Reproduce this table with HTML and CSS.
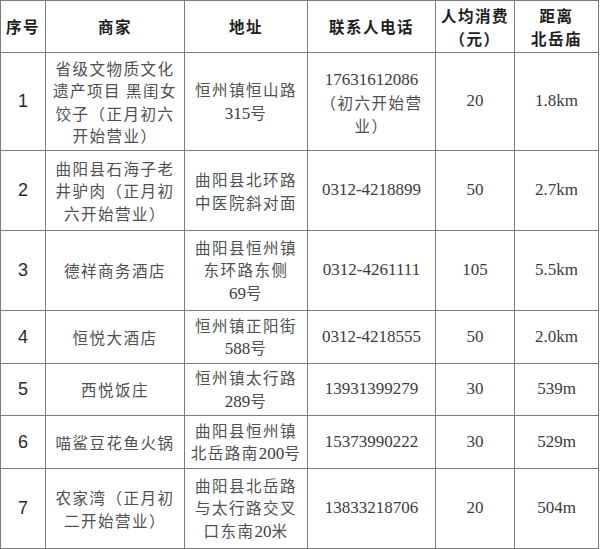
FILE: index.html
```html
<!DOCTYPE html>
<html lang="zh">
<head>
<meta charset="utf-8">
<link rel="stylesheet" href="styles.css">
</head>
<body>
<table class="tbl">
  <colgroup>
    <col class="c1"><col class="c2"><col class="c3"><col class="c4"><col class="c5"><col class="c6">
  </colgroup>
  <thead>
    <tr class="h-head">
      <th>序号</th><th>商家</th><th>地址</th><th>联系人电话</th><th>人均消费<br>（元）</th><th>距离<br>北岳庙</th>
    </tr>
  </thead>
  <tbody>
    <tr class="h-r1">
      <td class="num">1</td>
      <td>省级文物质文化<br>遗产项目 黑闺女<br>饺子（正月初六<br>开始营业）</td>
      <td>恒州镇恒山路<br><span class="lat">315</span>号</td>
      <td><span class="lat">17631612086</span><br>（初六开始营<br>业）</td>
      <td class="lat">20</td>
      <td class="lat">1.8km</td>
    </tr>
    <tr class="h-r2">
      <td class="num">2</td>
      <td>曲阳县石海子老<br>井驴肉（正月初<br>六开始营业）</td>
      <td>曲阳县北环路<br>中医院斜对面</td>
      <td class="lat">0312-4218899</td>
      <td class="lat">50</td>
      <td class="lat">2.7km</td>
    </tr>
    <tr class="h-r3">
      <td class="num">3</td>
      <td>德祥商务酒店</td>
      <td>曲阳县恒州镇<br>东环路东侧<br><span class="lat">69</span>号</td>
      <td class="lat">0312-4261111</td>
      <td class="lat">105</td>
      <td class="lat">5.5km</td>
    </tr>
    <tr class="h-r4">
      <td class="num">4</td>
      <td>恒悦大酒店</td>
      <td>恒州镇正阳街<br><span class="lat">588</span>号</td>
      <td class="lat">0312-4218555</td>
      <td class="lat">50</td>
      <td class="lat">2.0km</td>
    </tr>
    <tr class="h-r5">
      <td class="num">5</td>
      <td>西悦饭庄</td>
      <td>恒州镇太行路<br><span class="lat">289</span>号</td>
      <td class="lat">13931399279</td>
      <td class="lat">30</td>
      <td class="lat">539m</td>
    </tr>
    <tr class="h-r6">
      <td class="num">6</td>
      <td>喵鲨豆花鱼火锅</td>
      <td>曲阳县恒州镇<br>北岳路南<span class="lat">200</span>号</td>
      <td class="lat">15373990222</td>
      <td class="lat">30</td>
      <td class="lat">529m</td>
    </tr>
    <tr class="h-r7">
      <td class="num">7</td>
      <td>农家湾（正月初<br>二开始营业）</td>
      <td>曲阳县北岳路<br>与太行路交叉<br>口东南<span class="lat">20</span>米</td>
      <td class="lat">13833218706</td>
      <td class="lat">20</td>
      <td class="lat">504m</td>
    </tr>
  </tbody>
</table>
</body>
</html>
```

FILE: styles.css
```css
html, body {
  margin: 0;
  padding: 0;
  background: #ffffff;
}

.tbl {
  border-collapse: collapse;
  table-layout: fixed;
  width: 598px;
  font-family: "Noto Sans CJK SC", "Noto Sans", sans-serif;
  font-size: 15.5px;
  letter-spacing: 1.5px;
  line-height: 22.5px;
  color: #505050;
}

.c1 { width: 45px; }
.c2 { width: 139px; }
.c3 { width: 123px; }
.c4 { width: 128px; }
.c5 { width: 79px; }
.c6 { width: 84px; }

.tbl th,
.tbl td {
  border: 1px solid #7a7a7a;
  padding: 0;
  text-align: center;
  vertical-align: middle;
  white-space: nowrap;
  overflow: hidden;
}

.tbl th {
  font-weight: 700;
  color: #1e1e1e;
  line-height: 23px;
}

.lat {
  font-family: "Liberation Serif", "Noto Sans CJK SC", serif;
  font-size: 17px;
  letter-spacing: 0;
  color: #3c3c3c;
}

.num {
  font-family: "Liberation Sans", Arial, sans-serif;
  font-size: 18px;
  letter-spacing: 0;
  color: #2a2a2a;
}

.h-head { height: 52px; }
.h-r1 { height: 98px; }
.h-r2 { height: 80px; }
.h-r3 { height: 80px; }
.h-r4 { height: 53px; }
.h-r5 { height: 52px; }
.h-r6 { height: 53px; }
.h-r7 { height: 80px; }
```
